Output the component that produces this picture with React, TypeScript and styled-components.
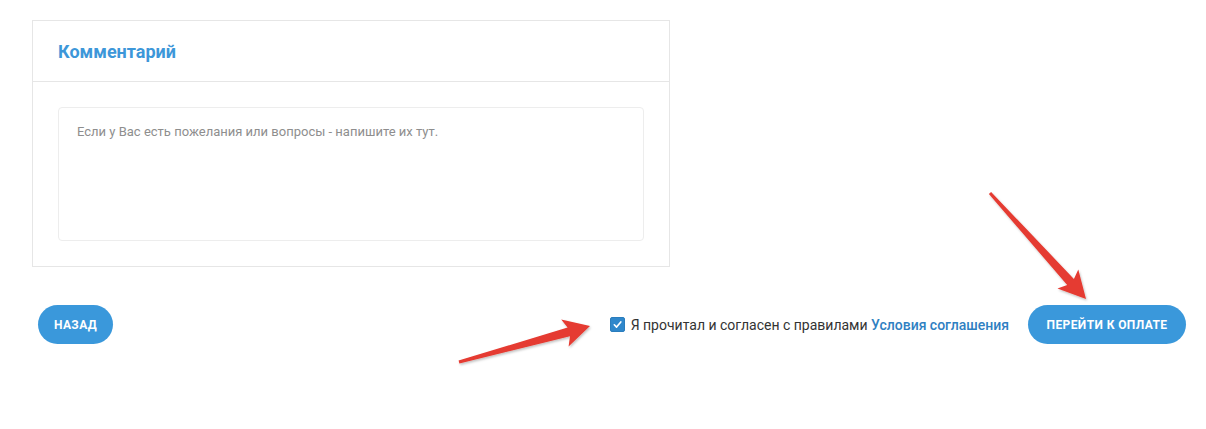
import { FC, useState } from "react";
import styled, { createGlobalStyle } from "styled-components";

const GlobalStyle = createGlobalStyle`
  html, body {
    margin: 0;
    padding: 0;
    background: #ffffff;
  }

  body {
    font-family: Roboto, "Noto Sans", Arial, sans-serif;
  }
`;

const Page = styled.div`
  position: relative;
  width: 1206px;
  height: 429px;
  box-sizing: border-box;
  padding: 20px 20px 0 32px;
  overflow: hidden;
`;

const Card = styled.section`
  width: 638px;
  box-sizing: border-box;
  border: 1px solid #e6e6e6;
  background: #fff;
`;

const CardHeader = styled.div`
  height: 60px;
  padding: 0 25px;
  display: flex;
  align-items: center;
  border-bottom: 1px solid #e6e6e6;
`;

const Title = styled.h3`
  margin: 0;
  font-family: Roboto, sans-serif;
  font-weight: 700;
  font-size: 18px;
  color: #3d97d9;
`;

const CardBody = styled.div`
  padding: 25px;
`;

const CommentInput = styled.textarea`
  display: block;
  width: 100%;
  height: 134px;
  box-sizing: border-box;
  padding: 15px 18px;
  border: 1px solid #ededed;
  border-radius: 4px;
  resize: none;
  outline: none;
  font-family: Roboto, sans-serif;
  font-size: 13px;
  line-height: 18px;
  color: #333;

  &::placeholder {
    color: #8e8e8e;
    opacity: 1;
  }
`;

const Actions = styled.div`
  margin-top: 38px;
  padding-left: 6px;
  display: flex;
  align-items: center;
  justify-content: space-between;
`;

const RightGroup = styled.div`
  display: flex;
  align-items: center;
  gap: 19px;
`;

const PillButton = styled.button<{ $width: number }>`
  width: ${(p) => p.$width}px;
  height: 39px;
  border: none;
  border-radius: 20px;
  background-color: #3a98db;
  color: #fff;
  font-family: Roboto, sans-serif;
  font-weight: 700;
  font-size: 12px;
  letter-spacing: 0.4px;
  text-transform: uppercase;
  cursor: pointer;

  &:hover {
    background-color: #2f88c9;
  }
`;

const Agreement = styled.label`
  display: flex;
  align-items: center;
  gap: 6px;
  font-family: Roboto, sans-serif;
  font-size: 14px;
  color: #333;
  cursor: pointer;

  input {
    display: none;
  }
`;

const Box = styled.span<{ $checked: boolean }>`
  width: 15px;
  height: 15px;
  box-sizing: border-box;
  border-radius: 2px;
  background: ${(p) => (p.$checked ? "#2f87cb" : "#fff")};
  border: 1px solid ${(p) => (p.$checked ? "#2a7dbd" : "#bbb")};
  display: flex;
  align-items: center;
  justify-content: center;
`;

const TermsLink = styled.a`
  color: #2f80c2;
  font-weight: 500;
  text-decoration: none;
`;

const Overlay = styled.svg`
  position: absolute;
  left: 0;
  top: 0;
  pointer-events: none;
`;

type Pt = [number, number];

// tapered annotation arrow, thin at the tail
const arrowPoints = (tail: Pt, tip: Pt, headLen: number, headW: number, tailW: number, neckW: number) => {
  const dx = tip[0] - tail[0];
  const dy = tip[1] - tail[1];
  const len = Math.hypot(dx, dy);
  const ux = dx / len;
  const uy = dy / len;
  const px = -uy;
  const py = ux;
  const bx = tip[0] - ux * headLen;
  const by = tip[1] - uy * headLen;
  const nbx = bx + ux * 4;
  const nby = by + uy * 4;
  const pts: Pt[] = [
    [tail[0] + px * tailW, tail[1] + py * tailW],
    [nbx + px * neckW, nby + py * neckW],
    [bx + px * headW, by + py * headW],
    tip,
    [bx - px * headW, by - py * headW],
    [nbx - px * neckW, nby - py * neckW],
    [tail[0] - px * tailW, tail[1] - py * tailW],
  ];
  return pts.map((p) => `${p[0].toFixed(1)},${p[1].toFixed(1)}`).join(" ");
};

const App: FC = () => {
  const [agree, setAgree] = useState(true);
  return (
    <Page>
      <GlobalStyle />
      <Card>
        <CardHeader>
          <Title>Комментарий</Title>
        </CardHeader>
        <CardBody>
          <CommentInput placeholder="Если у Вас есть пожелания или вопросы - напишите их тут." />
        </CardBody>
      </Card>
      <Actions>
        <PillButton $width={75}>Назад</PillButton>
        <RightGroup>
          <Agreement>
            <input type="checkbox" checked={agree} onChange={(e) => setAgree(e.target.checked)} />
            <Box $checked={agree}>
              {agree && (
                <svg width="11" height="11" viewBox="0 0 12 12">
                  <path d="M2.5 6.3 L5 8.8 L9.6 3.2" fill="none" stroke="#fff" strokeWidth="1.8" strokeLinecap="round" strokeLinejoin="round" />
                </svg>
              )}
            </Box>
            <span>
              Я прочитал и согласен с правилами <TermsLink href="#">Условия соглашения</TermsLink>
            </span>
          </Agreement>
          <PillButton $width={158}>Перейти к оплате</PillButton>
        </RightGroup>
      </Actions>
      <Overlay width="1206" height="429" viewBox="0 0 1206 429">
        <defs>
          <filter id="arrowShadow" x="-10%" y="-10%" width="120%" height="120%">
            <feDropShadow dx="1" dy="1.5" stdDeviation="1.2" floodColor="#000" floodOpacity="0.25" />
          </filter>
        </defs>
        <polygon points={arrowPoints([459, 362], [590, 326], 26, 14, 1.5, 4.5)} fill="#e53a30" filter="url(#arrowShadow)" />
        <polygon points={arrowPoints([990, 193], [1086, 299], 27, 14, 1.5, 4.5)} fill="#e53a30" filter="url(#arrowShadow)" />
      </Overlay>
    </Page>
  );
};

export default App;
